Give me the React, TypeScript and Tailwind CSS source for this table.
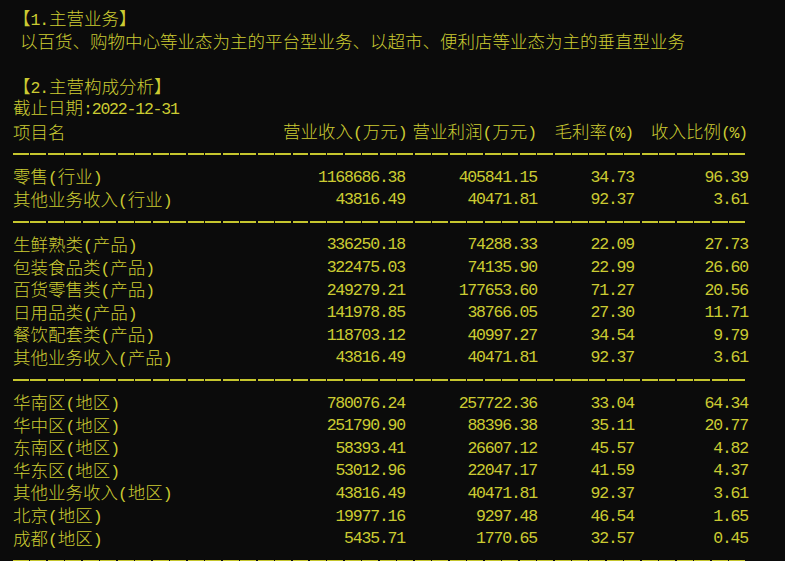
const cjk = "font-['Noto_Sans_CJK_SC',sans-serif] font-light";
const mono = "font-['Liberation_Mono',monospace] text-[16.5px] tracking-[-1.2px]";

type Row = [string, string, string, string, string];

const industryRows: Row[] = [
  ["零售(行业)", "1168686.38", "405841.15", "34.73", "96.39"],
  ["其他业务收入(行业)", "43816.49", "40471.81", "92.37", "3.61"],
];

const productRows: Row[] = [
  ["生鲜熟类(产品)", "336250.18", "74288.33", "22.09", "27.73"],
  ["包装食品类(产品)", "322475.03", "74135.90", "22.99", "26.60"],
  ["百货零售类(产品)", "249279.21", "177653.60", "71.27", "20.56"],
  ["日用品类(产品)", "141978.85", "38766.05", "27.30", "11.71"],
  ["餐饮配套类(产品)", "118703.12", "40997.27", "34.54", "9.79"],
  ["其他业务收入(产品)", "43816.49", "40471.81", "92.37", "3.61"],
];

const regionRows: Row[] = [
  ["华南区(地区)", "780076.24", "257722.36", "33.04", "64.34"],
  ["华中区(地区)", "251790.90", "88396.38", "35.11", "20.77"],
  ["东南区(地区)", "58393.41", "26607.12", "45.57", "4.82"],
  ["华东区(地区)", "53012.96", "22047.17", "41.59", "4.37"],
  ["其他业务收入(地区)", "43816.49", "40471.81", "92.37", "3.61"],
  ["北京(地区)", "19977.16", "9297.48", "46.54", "1.65"],
  ["成都(地区)", "5435.71", "1770.65", "32.57", "0.45"],
];

const grid = "grid grid-cols-[270px_122px_132px_97px_114px] h-[22.6px] items-center";

// half-width characters get the mono font, the rest the CJK one
function Text({ value, className = "" }: { value: string; className?: string }) {
  const parts = value.split(/([\x20-\x7e]+)/).filter(Boolean);
  return (
    <span className={`whitespace-nowrap ${className}`}>
      {parts.map((p, i) =>
        /^[\x20-\x7e]+$/.test(p) ? (
          <span key={i} className={`${mono} mr-[1px]`}>
            {p}
          </span>
        ) : (
          <span key={i} className={cjk}>
            {p}
          </span>
        ),
      )}
    </span>
  );
}

function Separator() {
  return (
    <div className="flex h-[22.6px] w-[734px] items-center">
      {Array.from({ length: 42 }).map((_, i) => (
        <div key={i} className="mr-[1.5px] h-[2px] flex-1 bg-[#c6c62e]" />
      ))}
    </div>
  );
}

function DataRow({ row }: { row: Row }) {
  return (
    <div className={grid}>
      <Text value={row[0]} />
      {row.slice(1).map((v, i) => (
        <span key={i} className={`${mono} text-right`}>
          {v}
        </span>
      ))}
    </div>
  );
}

export default function App() {
  return (
    <div className="h-[561px] w-[785px] overflow-hidden bg-[#0b0b0b] pl-[13px] pt-[7px] text-[17.5px] leading-[22.6px] text-[#cbcb32]">
      <div className="h-[22.6px]">
        <Text value="【1.主营业务】" />
      </div>
      <div className="h-[22.6px] pl-[7px]">
        <Text value="以百货、购物中心等业态为主的平台型业务、以超市、便利店等业态为主的垂直型业务" />
      </div>
      <div className="h-[22.6px]" />
      <div className="h-[22.6px]">
        <Text value="【2.主营构成分析】" />
      </div>
      <div className="flex h-[22.6px] items-center">
        <Text value="截止日期:2022-12-31" />
      </div>
      <div className={grid}>
        <Text value="项目名" />
        <Text value="营业收入(万元)" className="text-right" />
        <Text value="营业利润(万元)" className="text-right" />
        <Text value="毛利率(%)" className="text-right" />
        <Text value="收入比例(%)" className="text-right" />
      </div>
      <Separator />
      {industryRows.map((r) => (
        <DataRow key={r[0]} row={r} />
      ))}
      <Separator />
      {productRows.map((r) => (
        <DataRow key={r[0]} row={r} />
      ))}
      <Separator />
      {regionRows.map((r) => (
        <DataRow key={r[0]} row={r} />
      ))}
      <Separator />
    </div>
  );
}
